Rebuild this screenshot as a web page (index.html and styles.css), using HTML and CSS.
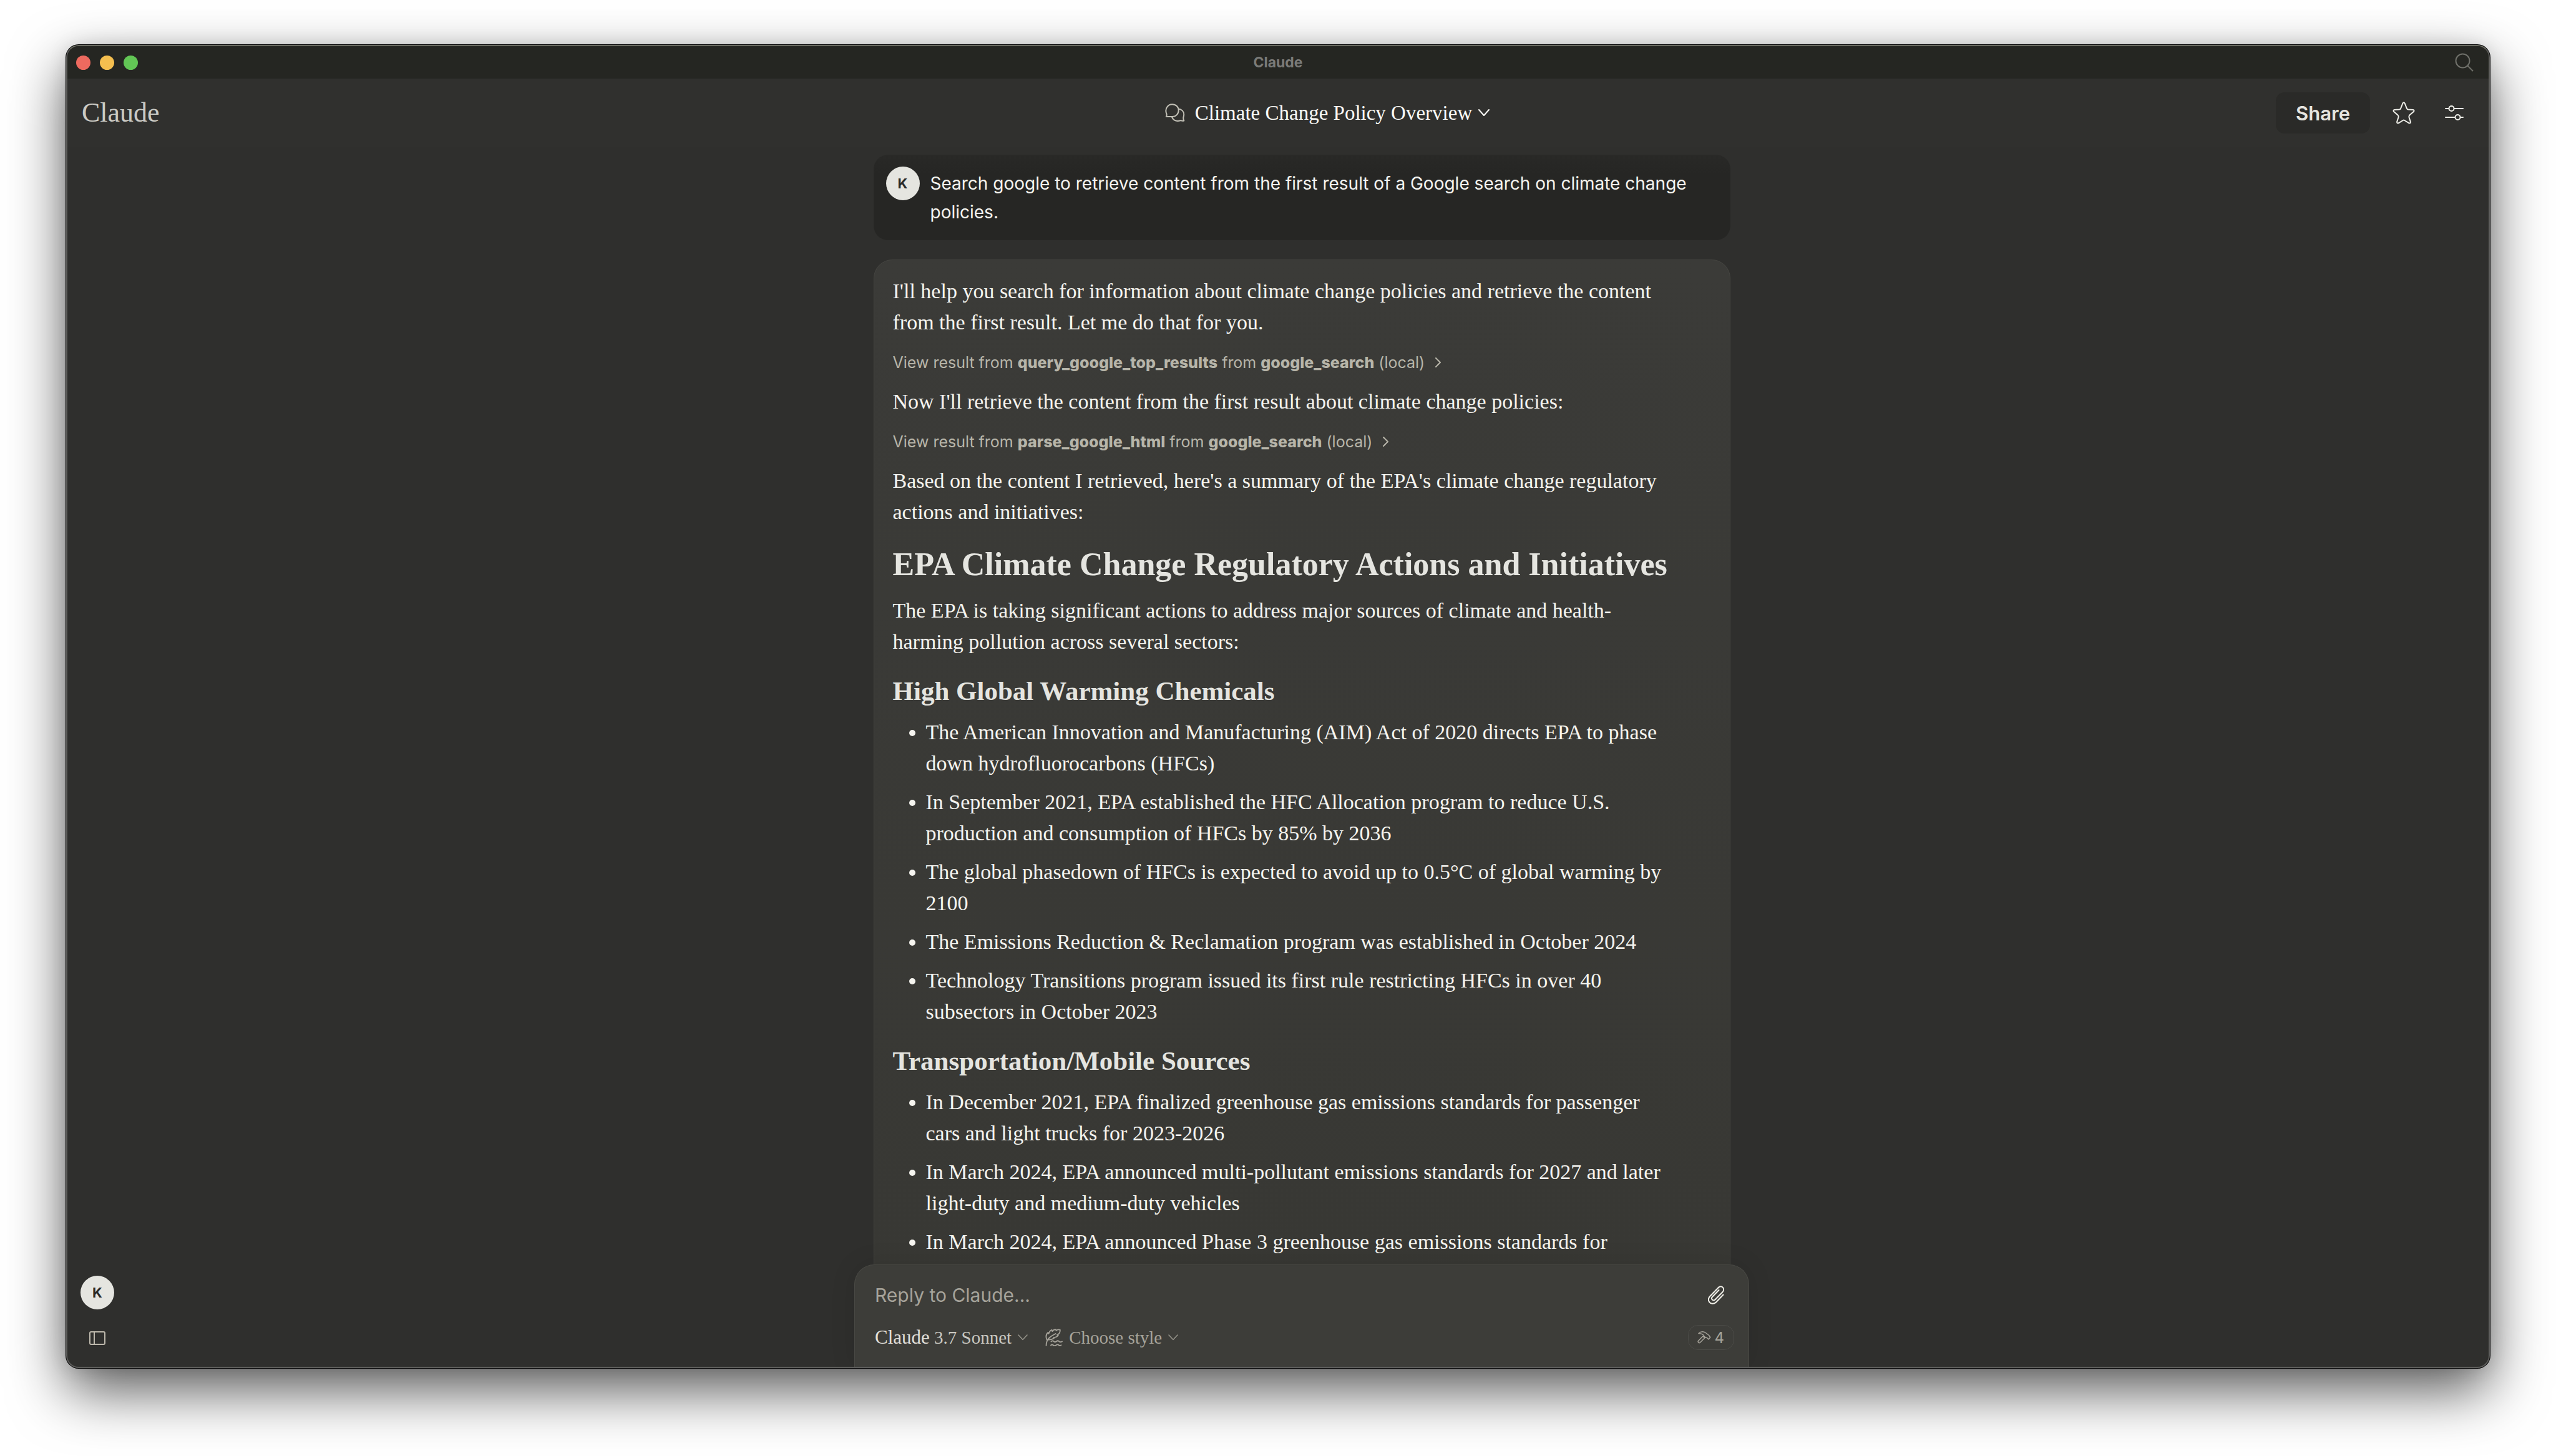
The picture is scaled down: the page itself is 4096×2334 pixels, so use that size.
FILE: index.html
```html
<!DOCTYPE html>
<html lang="en">
<head>
<meta charset="utf-8">
<title>Claude</title>
<link rel="stylesheet" href="styles.css">
</head>
<body>
<div class="window">
  <div class="titlebar">
    <div class="lights">
      <span class="light light-close"></span>
      <span class="light light-min"></span>
      <span class="light light-max"></span>
    </div>
    <div class="titlebar-name">Claude</div>
    <button class="icon-button titlebar-search" aria-label="Search">
      <svg width="30" height="30" viewBox="0 0 30 30" fill="none" stroke="currentColor" stroke-width="2"><circle cx="12.500" cy="12.500" r="11"/><path d="M20.500 20.500L29 29"/></svg>
    </button>
  </div>

  <header class="header">
    <a class="logo" href="#">Claude</a>
    <button class="chat-title">
      <svg class="chat-title-icon" width="32" height="30" viewBox="0 0 32 30" fill="none" stroke="currentColor" stroke-width="2" stroke-linejoin="round"><path d="M11.500 1.200C17.500 1.200 21.700 5.600 21.700 11C21.700 16.600 17.200 21 11.500 21H1.800C2.800 19.500 2.800 18 2.400 16.500C-.8 9 4 1.200 11.500 1.200Z"/><path d="M21.500 8.500C26.500 8.800 30.300 13 30.200 17.500C30.200 19.500 29.600 21 29.300 22.500C29.100 24.200 29.500 26 30.300 27.500C27.500 28.300 26.500 26.800 24.500 27.300C19 29 13.500 27.500 11 21.500"/></svg>
      <span class="chat-title-text">Climate Change Policy Overview</span>
      <svg width="18" height="12" viewBox="0 0 18 12" fill="none" stroke="currentColor" stroke-width="2" stroke-linecap="round" stroke-linejoin="round"><path d="M1 1L9 10L17 1"/></svg>
    </button>
    <div class="actions">
      <button class="share">Share</button>
      <button class="icon-button" aria-label="Star chat">
        <svg width="36" height="36" viewBox="0 0 36 36" fill="none" stroke="currentColor" stroke-width="2" stroke-linejoin="round"><path d="M16.400 2.500Q18 0 19.600 2.500L22.600 10.200Q23.200 12.200 25.200 12.400L33 13Q35.600 13.800 33.800 16L27.400 21.600Q26 23 26.500 25L28.900 32.400Q29 35.200 26.400 34.300L19.300 30Q18 29.200 16.700 30L9.600 34.300Q7 35.200 7.100 32.400L9.500 25Q10 23 8.600 21.600L2.200 16Q.4 13.800 3 13L10.800 12.400Q12.800 12.200 13.400 10.200Z"/></svg>
      </button>
      <button class="icon-button" aria-label="Chat controls">
        <svg width="30" height="26" viewBox="0 0 30 26" fill="none" stroke="currentColor" stroke-width="2" stroke-linecap="round"><path d="M1 6H6M15 6H29M1 20H16M25 20H29"/><circle cx="10.500" cy="6" r="4"/><circle cx="20.500" cy="20" r="4"/></svg>
      </button>
    </div>
  </header>

  <div class="workspace">
    <nav class="rail" aria-label="Account">
      <button class="avatar" aria-label="Account K">K</button>
      <button class="icon-button rail-toggle" aria-label="Open sidebar">
        <svg width="26" height="22" viewBox="0 0 26 22" fill="none" stroke="currentColor" stroke-width="2"><rect x="1" y="1" width="24" height="20" rx="2"/><path d="M8 1V21"/></svg>
      </button>
    </nav>

    <main class="main">
      <div class="thread">
        <section class="user-message">
          <span class="avatar">K</span>
          <p class="user-text">Search google to retrieve content from the first result of a Google search on climate change policies.</p>
        </section>

        <article class="reply">
          <p>I'll help you search for information about climate change policies and retrieve the content from the first result. Let me do that for you.</p>
          <button class="tool"><span>View result from <b>query_google_top_results</b> from <b>google_search</b> (local)</span><svg width="10" height="16" viewBox="0 0 10 16" fill="none" stroke="currentColor" stroke-width="2" stroke-linecap="round" stroke-linejoin="round"><path d="M1 1L8 8L1 15"/></svg></button>
          <p>Now I'll retrieve the content from the first result about climate change policies:</p>
          <button class="tool"><span>View result from <b>parse_google_html</b> from <b>google_search</b> (local)</span><svg width="10" height="16" viewBox="0 0 10 16" fill="none" stroke="currentColor" stroke-width="2" stroke-linecap="round" stroke-linejoin="round"><path d="M1 1L8 8L1 15"/></svg></button>
          <p>Based on the content I retrieved, here's a summary of the EPA's climate change regulatory actions and initiatives:</p>
          <h1>EPA Climate Change Regulatory Actions and Initiatives</h1>
          <p>The EPA is taking significant actions to address major sources of climate and health-harming pollution across several sectors:</p>
          <h2>High Global Warming Chemicals</h2>
          <ul>
            <li>The American Innovation and Manufacturing (AIM) Act of 2020 directs EPA to phase down hydrofluorocarbons (HFCs)</li>
            <li>In September 2021, EPA established the HFC Allocation program to reduce U.S. production and consumption of HFCs by 85% by 2036</li>
            <li>The global phasedown of HFCs is expected to avoid up to 0.5°C of global warming by 2100</li>
            <li>The Emissions Reduction &amp; Reclamation program was established in October 2024</li>
            <li>Technology Transitions program issued its first rule restricting HFCs in over 40 subsectors in October 2023</li>
          </ul>
          <h2>Transportation/Mobile Sources</h2>
          <ul>
            <li>In December 2021, EPA finalized greenhouse gas emissions standards for passenger cars and light trucks for 2023-2026</li>
            <li>In March 2024, EPA announced multi-pollutant emissions standards for 2027 and later light-duty and medium-duty vehicles</li>
            <li>In March 2024, EPA announced Phase 3 greenhouse gas emissions standards for</li>
          </ul>
        </article>
      </div>

      <form class="composer">
        <div class="composer-row">
          <input class="composer-input" type="text" placeholder="Reply to Claude..." aria-label="Reply to Claude">
          <button class="icon-button attach" type="button" aria-label="Attach a file">
            <svg width="26" height="30" viewBox="0 0 26 30" fill="none" stroke="currentColor" stroke-width="2" stroke-linecap="round" stroke-linejoin="round"><path d="M24.500 14.500L13 26.500C9.500 30 4.500 29.300 2.300 26.300C.3 23.500.6 19.800 3.200 17L16.500 3.200C18.800.8 22 .8 23.900 2.900C25.600 4.900 25.400 8 23.300 10.200L11.600 22.200C10.300 23.500 8.200 23.700 6.900 22.400C5.600 21.100 5.700 19.200 7.100 17.700L17.500 7"/></svg>
          </button>
        </div>
        <div class="composer-row">
          <div class="pickers">
            <button class="picker" type="button"><span><span class="picker-brand">Claude</span> 3.7 Sonnet</span><svg class="picker-caret" width="16" height="10" viewBox="0 0 16 10" fill="none" stroke="currentColor" stroke-width="1.500" stroke-linecap="round" stroke-linejoin="round"><path d="M1 1L8 8.500L15 1"/></svg></button>
            <button class="picker picker-style" type="button"><svg width="28" height="28" viewBox="0 0 28 28" fill="none" stroke="currentColor" stroke-width="1.800" stroke-linecap="round" stroke-linejoin="round"><path d="M1.500 27C1.500 21 3 17.500 7 14C10.500 11 13.500 9.500 16.500 8M2.500 17.500C.5 12.500 1.500 8.500 4.500 6L5.500 8C6.500 4.500 8 2.800 10.500 1.800L11.300 4.200C13 1.800 14.500 1 17 1.200L17.500 3C19.500 1.300 21.500 1 23.800 1.800C24 6 22.500 8.500 19 9.800L20.800 10.500C18.500 13.500 16 14 13.500 14L14 15.300C11 17.500 7.500 17.800 4.500 17.500M9.500 20.500C11 19 12.500 19 14 20.500S16.500 21.500 18 20.200S21 19 22.500 20.500S25.500 21.300 27 20.500M9 26.500C10.500 25 11.500 25 13 26.500S16 27.300 17.500 26.200S20.500 25 22 26.500S24.500 26.800 25.500 26.200"/></svg><span>Choose style</span><svg class="picker-caret" width="16" height="10" viewBox="0 0 16 10" fill="none" stroke="currentColor" stroke-width="1.500" stroke-linecap="round" stroke-linejoin="round"><path d="M1 1L8 8.500L15 1"/></svg></button>
          </div>
          <button class="tools-count" type="button" aria-label="4 tools available"><svg width="22" height="20" viewBox="0 0 22 20" fill="none" stroke="currentColor" stroke-width="1.500" stroke-linecap="round" stroke-linejoin="round"><path d="M2 3.500C5.500.2 10 .2 14 3L18.500 6.500C19.500 7.500 19.500 8.500 20.800 9.500L18 13L15.500 10.500C14 10 13.500 10.500 12.500 9.500L10.500 7.500C9.800 5.500 7.500 3.800 2 3.500ZM8.800 8L1.500 15.500C.3 17 2.500 19.600 4 18.500L11.800 10.800Z"/></svg><span>4</span></button>
        </div>
      </form>
    </main>
  </div>
</div>
</body>
</html>
```
FILE: styles.css
```css
:root {
  --serif: "Liberation Serif", serif;
  --sans: Inter, sans-serif;
  --text: #f5f4ef;
  --muted: #b7b5a9;
  --faint: #a6a39a;
}

* { box-sizing: border-box; }

body {
  margin: 0;
  height: 100vh;
  padding: 72px 106px 141px;
  background: #fff;
  color: var(--text);
  font-family: var(--sans);
  overflow: hidden;
}

button, input {
  font: inherit;
  color: inherit;
  background: none;
  border: 0;
  padding: 0;
  margin: 0;
}

p, h1, h2, ul { margin: 0; }
svg { display: block; flex: none; }

.window {
  height: 100%;
  display: flex;
  flex-direction: column;
  overflow: hidden;
  border: 2px solid #5b5b59;
  border-top-color: #696a60;
  border-radius: 20px;
  background: #2f2f2d;
  box-shadow: 0 0 0 1px #000, 0 36px 90px rgba(0, 0, 0, .65), 0 0 30px rgba(0, 0, 0, .1);
}

.titlebar {
  flex: none;
  height: 52px;
  padding: 0 14px;
  display: grid;
  grid-template-columns: 1fr auto 1fr;
  align-items: center;
  background: #252622;
}
.lights { display: flex; gap: 15px; }
.light { width: 23px; height: 23px; border-radius: 50%; }
.light-close { background: #ed6a5f; }
.light-min { background: #f5bf4f; }
.light-max { background: #62c655; }
.titlebar-name { font-size: 23px; font-weight: 700; color: #7b7b78; }
.titlebar-search { justify-self: end; padding-right: 10px; color: #6f706a; }

.header {
  flex: none;
  height: 110px;
  display: grid;
  grid-template-columns: 158px 1fr auto 1fr;
  align-items: center;
  background: #30302e;
}
.logo {
  padding-left: 23px;
  font: 44px/1 var(--serif);
  color: #cbcac4;
  text-decoration: none;
}
.chat-title {
  grid-column: 3;
  display: flex;
  align-items: center;
  gap: 10px;
  font: 33px/50px var(--serif);
  color: #fafaf7;
}
.chat-title-icon { color: #c2c0b6; }
.chat-title-text { padding-left: 6px; }
.actions {
  justify-self: end;
  display: flex;
  align-items: center;
  padding-right: 40px;
  gap: 36px;
  color: #eeeee8;
}
.actions .icon-button:last-child { margin-left: 12px; }
.share {
  height: 66px;
  padding: 0 32px;
  border-radius: 14px;
  background: #2a2a28;
  color: #e5e5e0;
  font-size: 31px;
  font-weight: 600;
}

.workspace { flex: 1; min-height: 0; display: flex; }
.rail {
  flex: none;
  width: 94px;
  display: flex;
  flex-direction: column;
  justify-content: flex-end;
  align-items: center;
  gap: 35px;
  padding: 0 0 35px 2px;
}
.rail-toggle { color: #bdb8ac; }
.avatar {
  flex: none;
  width: 54px;
  height: 54px;
  border-radius: 50%;
  display: grid;
  place-items: center;
  background: #e5e5e0;
  color: #2a2a28;
  font-size: 22px;
  font-weight: 700;
}

.main {
  flex: 1;
  min-width: 0;
  display: flex;
  flex-direction: column;
  align-items: center;
  padding: 12px 18px 0 0;
}
.thread {
  flex: 1;
  min-height: 0;
  overflow: hidden;
  width: 100%;
  max-width: 1373px;
  display: flex;
  flex-direction: column;
  gap: 31px;
}
.user-message {
  flex: none;
  display: flex;
  gap: 17px;
  padding: 19px 40px 22px 20px;
  border-radius: 23px;
  background: linear-gradient(#292927, #262624 30px);
}
.user-text { padding-top: 4px; font-size: 28px; line-height: 46px; }

.reply {
  flex: none;
  padding: 25px 88px 40px 30px;
  border: 1px solid #454541;
  border-radius: 30px 30px 0 0;
  background: linear-gradient(#3b3b38, #383834);
  font: 34px/50px var(--serif);
}
.tool {
  display: flex;
  align-items: center;
  gap: 17px;
  margin: 19px 0 18px;
  font: 25px/40px var(--sans);
  color: var(--muted);
}
.tool b { font-weight: 800; }
.reply h1 { margin: 28px 0 18px; font-size: 52px; line-height: 62px; color: #e5e5e0; }
.reply h2 { margin: 29px 0 16px; font-size: 43px; line-height: 50px; color: #e5e5e0; }
.reply ul { padding-left: 53px; display: grid; gap: 12px; }
.reply li::marker { color: var(--text); }

.composer {
  flex: none;
  width: 100%;
  max-width: 1434px;
  display: flex;
  flex-direction: column;
  gap: 26px;
  padding: 26px 23px 27px 32px;
  border: 1px solid #4a4a45;
  border-bottom: 0;
  border-radius: 32px 32px 0 0;
  background: #3d3d39;
  box-shadow: 0 0 40px rgba(0, 0, 0, .1);
}
.composer-row { display: flex; align-items: center; justify-content: space-between; }
.composer-input { flex: 1; height: 44px; font-size: 30px; outline: 0; }
.composer-input::placeholder { color: var(--faint); opacity: 1; }
.attach { padding-right: 16px; color: #f0efe8; }
.pickers { display: flex; gap: 28px; }
.picker {
  display: flex;
  align-items: center;
  gap: 10px;
  font: 29px/40px var(--serif);
  color: #c8c7c0;
}
.picker-brand { font-size: 31px; color: #e0dfd9; }
.picker-style { color: var(--faint); }
.picker-caret { color: #96948b; }
.tools-count {
  height: 40px;
  padding: 0 15px 0 14px;
  display: flex;
  align-items: center;
  gap: 5px;
  border: 1px solid #4b4b47;
  border-radius: 16px;
  color: var(--faint);
  font-size: 24px;
}
```
